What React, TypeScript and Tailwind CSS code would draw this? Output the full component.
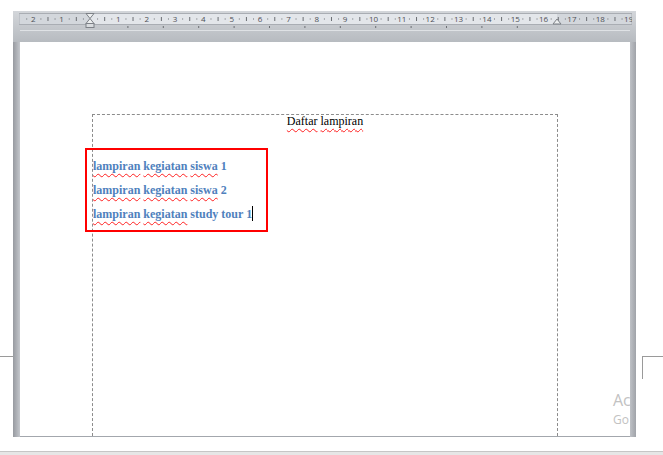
const CM = 28.35;
const ZERO = 71; // hourglass x inside the ruler svg (screen x 90)

function Ruler() {
  const nums: { x: number; label: string }[] = [];
  for (let i = -2; i <= 19; i++) {
    if (i === 0) continue;
    nums.push({ x: ZERO + i * CM, label: String(Math.abs(i)) });
  }
  const dots: number[] = [];
  const halves: number[] = [];
  for (let i = -3; i <= 19; i++) {
    const base = ZERO + i * CM;
    dots.push(base + CM * 0.25, base + CM * 0.75);
    halves.push(base + CM * 0.5);
  }
  const tabs: number[] = [];
  for (let t = 1; t <= 12; t++) tabs.push(ZERO + t * 35.4 + 2);

  return (
    <svg width={613} height={17} className="block">
      <rect x={0} y={0.5} width={613} height={11} fill="#d3d7dc" stroke="#a9adb3" />
      <rect x={ZERO} y={1} width={467} height={10} fill="#e3e6ea" />
      {dots.map((x, i) =>
        x > 1 && x < 612 ? <rect key={"d" + i} x={x} y={5.5} width={1} height={1} fill="#6b6e73" /> : null
      )}
      {halves.map((x, i) =>
        x > 1 && x < 612 ? <rect key={"h" + i} x={x} y={4} width={1} height={4} fill="#6b6e73" /> : null
      )}
      {nums.map((n) => (
        <text
          key={n.label + n.x}
          x={n.x}
          y={9}
          textAnchor="middle"
          fontSize={8}
          fill="#4d5056"
          fontFamily="'Open Sans', 'DejaVu Sans', sans-serif"
        >
          {n.label}
        </text>
      ))}
      {tabs.map((x, i) => (
        <rect key={"t" + i} x={x} y={13} width={1} height={2} fill="#6b6e73" />
      ))}
      {/* left indent hourglass */}
      <path d={`M${ZERO - 4} 0.5 L${ZERO + 4} 0.5 L${ZERO} 5.5 Z`} fill="#eceeef" stroke="#7d8187" />
      <path d={`M${ZERO} 5.5 L${ZERO + 4} 10.5 L${ZERO - 4} 10.5 Z`} fill="#eceeef" stroke="#7d8187" />
      <rect x={ZERO - 4} y={10.5} width={8} height={4} fill="#d9dcdf" stroke="#7d8187" />
      {/* right indent */}
      <path d={`M${538} 6 L${542} 11 L${534} 11 Z`} fill="#eceeef" stroke="#7d8187" />
    </svg>
  );
}

function Typo({ children }: { children: React.ReactNode }) {
  return (
    <span className="underline decoration-wavy decoration-[#ff2020] decoration-1 underline-offset-[3px]">
      {children}
    </span>
  );
}

export default function App() {
  return (
    <div className="relative w-[663px] h-[455px] overflow-hidden bg-white pt-[11px]">
      <div className="ml-[13px] w-[623px] h-[426px] flex flex-col bg-[#bfc3c8]">
        <div className="h-[31px] bg-gradient-to-b from-[#d3d6da] to-[#b7bbc0] pt-[2px] pl-[6px] relative">
          <Ruler />
          <div className="absolute left-[7px] top-[19px] w-[610px] h-px bg-[#dfe2e5]" />
        </div>
        <div className="flex flex-1">
          <div className="w-[7px] bg-gradient-to-r from-[#979aa0] to-[#c4c7cc]" />
          <div className="relative w-[610px] flex flex-col bg-white border-b border-[#a3a7ad] overflow-hidden">
            <div
              className="ml-[72px] mt-[72px] w-[466px] flex-1 border-t border-x border-dashed border-[#8c8c8c]"
              style={{ fontFamily: "'Liberation Serif', 'Times New Roman', serif" }}
            >
              <p className="text-center text-[12px] leading-[12px] text-black">
                <Typo>Daftar</Typo> <Typo>lampiran</Typo>
              </p>
              <div className="mt-[27px] text-[12px] leading-[24px] font-bold text-[#4f81bd]">
                <p>
                  <Typo>lampiran</Typo> <Typo>kegiatan</Typo> <Typo>siswa</Typo> 1
                </p>
                <p>
                  <Typo>lampiran</Typo> <Typo>kegiatan</Typo> <Typo>siswa</Typo> 2
                </p>
                <p>
                  <Typo>lampiran</Typo> <Typo>kegiatan</Typo> study tour 1
                  <span className="inline-block w-px h-[15px] bg-black align-[-3px]" />
                </p>
              </div>
            </div>

            <div className="absolute left-[65px] top-[106px] w-[183px] h-[84px] border-2 border-[#ff0000]" />

            <div
              className="absolute left-[593px] top-[349px] text-[#c2c2c2] whitespace-nowrap"
              style={{ fontFamily: "'Open Sans', 'Noto Sans', sans-serif" }}
            >
              <div className="text-[16px] leading-[18px]">Ac</div>
              <div className="mt-[4px] text-[12px] leading-[14px]">Go</div>
            </div>
          </div>
          <div className="w-[6px] bg-gradient-to-r from-[#bec1c6] to-[#a0a3a9]" />
        </div>
      </div>

      <div className="mt-[14px] h-[4px] bg-[#e6e6e6] border-t border-[#c6c6c6]" />

      <div className="absolute left-0 top-[356px] w-[13px] h-px bg-[#9a9a9a]" />
      <div className="absolute left-[642px] top-[356px] w-[21px] h-px bg-[#9a9a9a]" />
      <div className="absolute left-[642px] top-[356px] w-px h-[23px] bg-[#9a9a9a]" />
    </div>
  );
}
